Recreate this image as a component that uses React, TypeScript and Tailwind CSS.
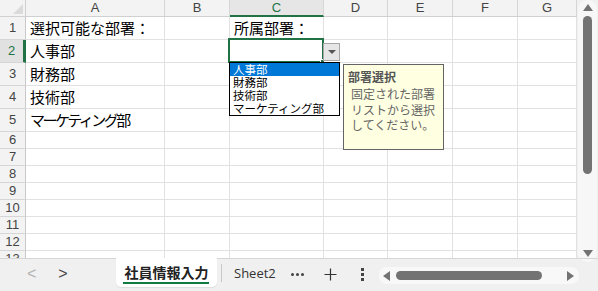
import React from "react";

const cols = ["A", "B", "C", "D", "E", "F", "G"];
const rowData: { n: number; h: string; a?: string; c?: string }[] = [
  { n: 1, h: "h-[23px]", a: "選択可能な部署：", c: "所属部署：" },
  { n: 2, h: "h-[23px]", a: "人事部" },
  { n: 3, h: "h-[23px]", a: "財務部" },
  { n: 4, h: "h-[23px]", a: "技術部" },
  { n: 5, h: "h-[23px]", a: "マーケティング部" },
  { n: 6, h: "h-[17px]" },
  { n: 7, h: "h-[17px]" },
  { n: 8, h: "h-[17px]" },
  { n: 9, h: "h-[17px]" },
  { n: 10, h: "h-[17px]" },
  { n: 11, h: "h-[17px]" },
  { n: 12, h: "h-[17px]" },
  { n: 13, h: "h-[17px]" },
];

const jp = { fontFamily: '"Noto Sans CJK JP", "Noto Sans", sans-serif' };
const lat = { fontFamily: '"Liberation Sans", Arial, sans-serif' };

export default function App() {
  return (
    <div className="w-[598px] h-[291px] bg-[#f0f0f0] flex flex-col overflow-hidden" style={lat}>
      <div className="flex h-[258px]">
        <div className="relative w-[577px] h-[258px] overflow-hidden bg-white">
          <div className="grid grid-cols-[26px_139px_65px_94px_64px_65px_65px_59px]">
            {/* header row */}
            <div className="h-[17px] bg-[#f3f3f3] border-r border-b border-[#d0d0d0] relative">
              <div className="absolute right-[2px] bottom-[2px] w-0 h-0 border-l-[10px] border-l-transparent border-b-[10px] border-b-[#dadada]" />
            </div>
            {cols.map((c) => (
              <div
                key={c}
                className={
                  c === "C"
                    ? "h-[17px] bg-[#e6e6e6] border-r border-[#d6d6d6] border-b-2 border-b-[#217346] flex items-center justify-center text-[13px] text-[#217346]"
                    : "h-[17px] bg-[#f3f3f3] border-r border-b border-[#d6d6d6] border-b-[#d0d0d0] flex items-center justify-center text-[13px] text-[#444]"
                }
              >
                {c}
              </div>
            ))}
            {rowData.map((r) => (
              <React.Fragment key={r.n}>
                <div
                  className={
                    r.n === 2
                      ? `${r.h} bg-[#e1e1e1] border-r-[3px] border-r-[#217346] border-b border-b-[#d6d6d6] flex items-center justify-center text-[13px] text-[#217346]`
                      : `${r.h} bg-[#f3f3f3] border-r border-r-[#c8c8c8] border-b border-b-[#d6d6d6] flex items-center justify-center text-[13px] text-[#444]`
                  }
                >
                  {r.n}
                </div>
                {cols.map((c) => (
                  <div
                    key={c}
                    className={`${r.h} border-r border-b border-[#e1e1e1] flex items-center text-[15px] text-black whitespace-nowrap overflow-visible pl-[4px] ${
                      r.n === 5 ? "tracking-[-2.5px]" : ""
                    }`}
                    style={jp}
                  >
                    {c === "A" ? r.a : c === "C" ? r.c : null}
                  </div>
                ))}
              </React.Fragment>
            ))}
          </div>

          {/* selection */}
          <div className="absolute left-[228px] top-[38px] w-[96px] h-[25px] border-2 border-[#217346]" />
          <div className="absolute left-[320px] top-[59px] w-[5px] h-[5px] bg-[#217346] border border-white" />

          {/* dropdown button */}
          <div className="absolute left-[323px] top-[43px] w-[17px] h-[18px] bg-[#e6e6e6] border border-[#a6a6a6] flex items-center justify-center">
            <div className="w-0 h-0 border-l-[4px] border-l-transparent border-r-[4px] border-r-transparent border-t-[4px] border-t-[#555]" />
          </div>

          {/* dropdown list */}
          <div
            className="absolute left-[229px] top-[62px] w-[111px] h-[54px] bg-white border border-black text-[11.5px] leading-[13px] text-black"
            style={jp}
          >
            <div className="h-[13px] bg-[#0078d7] text-white pl-[3px]">人事部</div>
            <div className="h-[13px] pl-[3px]">財務部</div>
            <div className="h-[13px] pl-[3px]">技術部</div>
            <div className="h-[13px] pl-[3px] whitespace-nowrap">マーケティング部</div>
          </div>

          {/* tooltip */}
          <div
            className="absolute left-[343px] top-[64px] w-[101px] h-[86px] bg-[#ffffe1] border border-[#646464] px-[4px] pt-[3px]"
            style={jp}
          >
            <div className="text-[12px] leading-[17px] font-bold text-[#555]">部署選択</div>
            <div className="pl-[3px] mt-[1px] text-[12px] leading-[15.5px] text-[#666]">
              <div>固定された部署</div>
              <div>リストから選択</div>
              <div>してください。</div>
            </div>
          </div>
        </div>

        {/* vertical scrollbar */}
        <div className="w-[21px] h-[258px] pl-[1px] pr-[1px] pt-0">
          <div className="w-[19px] h-[262px] bg-[#f7f7f7] rounded-[9px] flex flex-col items-center relative">
            <div className="mt-[4px] w-0 h-0 border-l-[5px] border-l-transparent border-r-[5px] border-r-transparent border-b-[7px] border-b-[#737373]" />
            <div className="mt-[5px] w-[9px] h-[158px] bg-[#737373] rounded-[5px]" />
            <div className="absolute top-[250px] w-0 h-0 border-l-[5px] border-l-transparent border-r-[5px] border-r-transparent border-t-[7px] border-t-[#737373]" />
          </div>
        </div>
      </div>

      {/* bottom bar */}
      <div className="h-[33px] flex items-start border-t border-[#d6d6d6] relative">
        <div className="w-[116px] h-[30px] flex items-center">
          <span className="ml-[27px] text-[16px] text-[#b0b0b0]" style={lat}>&lt;</span>
          <span className="ml-[22px] text-[16px] text-[#444]" style={lat}>&gt;</span>
        </div>
        <div
          className="w-[101px] h-[29px] -mt-[1px] bg-white rounded-b-[5px] shadow-[0_1px_1px_rgba(0,0,0,0.08)] flex flex-col items-center justify-center relative"
          style={jp}
        >
          <span className="text-[14px] font-bold text-[#222] leading-[16px] -mt-[2px]">社員情報入力</span>
          <div className="absolute left-[7px] right-[8px] top-[24px] h-[2px] bg-[#107c41]" />
        </div>
        <div className="ml-[4px] mt-[5px] w-px h-[18px] bg-[#c8c8c8]" />
        <div className="ml-[12px] h-[30px] flex items-center text-[13px] text-[#333]" style={{ fontFamily: '"Open Sans", "Noto Sans", sans-serif' }}>
          Sheet2
        </div>
        <div className="ml-[15px] h-[30px] flex items-center gap-[2px]">
          <div className="w-[3px] h-[3px] rounded-full bg-[#444]" />
          <div className="w-[3px] h-[3px] rounded-full bg-[#444]" />
          <div className="w-[3px] h-[3px] rounded-full bg-[#444]" />
        </div>
        <div className="ml-[20px] h-[30px] flex items-center">
          <svg width="13" height="13" viewBox="0 0 13 13">
            <path d="M6.5 0.5v12M0.5 6.5h12" stroke="#333" strokeWidth="1.2" />
          </svg>
        </div>
        <div className="ml-[24px] h-[30px] flex flex-col items-center justify-center gap-[2px]">
          <div className="w-[3px] h-[3px] bg-[#444]" />
          <div className="w-[3px] h-[3px] bg-[#444]" />
          <div className="w-[3px] h-[3px] bg-[#444]" />
        </div>
        <div className="ml-[15px] mt-[8px] w-[200px] h-[17px] bg-[#f8f8f8] rounded-[8px] flex items-center relative">
          <div className="ml-[4px] w-0 h-0 border-t-[5px] border-t-transparent border-b-[5px] border-b-transparent border-r-[7px] border-r-[#737373]" />
          <div className="ml-[6px] w-[146px] h-[9px] bg-[#737373] rounded-[5px]" />
          <div className="absolute left-[188px] w-0 h-0 border-t-[5px] border-t-transparent border-b-[5px] border-b-transparent border-l-[7px] border-l-[#737373]" />
        </div>
      </div>
    </div>
  );
}
